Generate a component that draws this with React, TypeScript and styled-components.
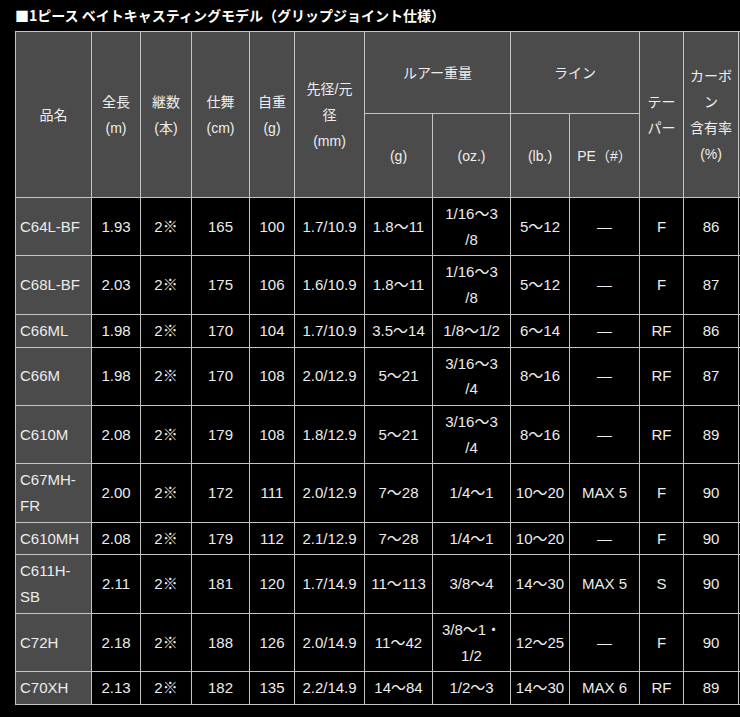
import React from "react";
import styled, { createGlobalStyle } from "styled-components";

interface RodRow {
  name: string;
  len: string;
  pcs: string;
  closed: string;
  weight: string;
  dia: string;
  lureG: string;
  lureOz: string;
  lineLb: string;
  pe: string;
  taper: string;
  carbon: string;
}

const rows: RodRow[] = [
  { name: "C64L-BF", len: "1.93", pcs: "2※", closed: "165", weight: "100", dia: "1.7/10.9", lureG: "1.8～11", lureOz: "1/16～3\n/8", lineLb: "5～12", pe: "—", taper: "F", carbon: "86" },
  { name: "C68L-BF", len: "2.03", pcs: "2※", closed: "175", weight: "106", dia: "1.6/10.9", lureG: "1.8～11", lureOz: "1/16～3\n/8", lineLb: "5～12", pe: "—", taper: "F", carbon: "87" },
  { name: "C66ML", len: "1.98", pcs: "2※", closed: "170", weight: "104", dia: "1.7/10.9", lureG: "3.5～14", lureOz: "1/8～1/2", lineLb: "6～14", pe: "—", taper: "RF", carbon: "86" },
  { name: "C66M", len: "1.98", pcs: "2※", closed: "170", weight: "108", dia: "2.0/12.9", lureG: "5～21", lureOz: "3/16～3\n/4", lineLb: "8～16", pe: "—", taper: "RF", carbon: "87" },
  { name: "C610M", len: "2.08", pcs: "2※", closed: "179", weight: "108", dia: "1.8/12.9", lureG: "5～21", lureOz: "3/16～3\n/4", lineLb: "8～16", pe: "—", taper: "RF", carbon: "89" },
  { name: "C67MH-\nFR", len: "2.00", pcs: "2※", closed: "172", weight: "111", dia: "2.0/12.9", lureG: "7～28", lureOz: "1/4～1", lineLb: "10～20", pe: "MAX 5", taper: "F", carbon: "90" },
  { name: "C610MH", len: "2.08", pcs: "2※", closed: "179", weight: "112", dia: "2.1/12.9", lureG: "7～28", lureOz: "1/4～1", lineLb: "10～20", pe: "—", taper: "F", carbon: "90" },
  { name: "C611H-\nSB", len: "2.11", pcs: "2※", closed: "181", weight: "120", dia: "1.7/14.9", lureG: "11～113", lureOz: "3/8～4", lineLb: "14～30", pe: "MAX 5", taper: "S", carbon: "90" },
  { name: "C72H", len: "2.18", pcs: "2※", closed: "188", weight: "126", dia: "2.0/14.9", lureG: "11～42", lureOz: "3/8～1・\n1/2", lineLb: "12～25", pe: "—", taper: "F", carbon: "90" },
  { name: "C70XH", len: "2.13", pcs: "2※", closed: "182", weight: "135", dia: "2.2/14.9", lureG: "14～84", lureOz: "1/2～3", lineLb: "14～30", pe: "MAX 6", taper: "RF", carbon: "89" },
];

// widths between grid lines, the last column runs off the page
const colWidths = [76, 49, 51, 58, 45, 70, 68, 78, 59, 70, 44, 55, 80];

const App: React.FC = () => {
  return (
    <>
      <GlobalStyle />
      <Page>
        <Title>■1ピース ベイトキャスティングモデル（グリップジョイント仕様）</Title>
        <SpecTable>
          <colgroup>
            {colWidths.map((w, i) => (
              <Col key={i} $w={w} />
            ))}
          </colgroup>
          <thead>
            <HeadRow $h={82}>
              <HeadCell rowSpan={2}>品名</HeadCell>
              <HeadCell rowSpan={2}>{"全長\n(m)"}</HeadCell>
              <HeadCell rowSpan={2}>{"継数\n(本)"}</HeadCell>
              <HeadCell rowSpan={2}>{"仕舞\n(cm)"}</HeadCell>
              <HeadCell rowSpan={2}>{"自重\n(g)"}</HeadCell>
              <HeadCell rowSpan={2}>{"先径/元\n径\n(mm)"}</HeadCell>
              <HeadCell colSpan={2}>ルアー重量</HeadCell>
              <HeadCell colSpan={2}>ライン</HeadCell>
              <HeadCell rowSpan={2}>{"テー\nパー"}</HeadCell>
              <HeadCell rowSpan={2}>{"カーボ\nン\n含有率\n(%)"}</HeadCell>
              <HeadCell rowSpan={2} />
            </HeadRow>
            <HeadRow $h={84}>
              <HeadCell>(g)</HeadCell>
              <HeadCell>(oz.)</HeadCell>
              <HeadCell>(lb.)</HeadCell>
              <HeadCell>PE（#）</HeadCell>
            </HeadRow>
          </thead>
          <tbody>
            {rows.map((r) => (
              <tr key={r.name}>
                <NameCell>{r.name}</NameCell>
                <DataCell>{r.len}</DataCell>
                <DataCell>{r.pcs}</DataCell>
                <DataCell>{r.closed}</DataCell>
                <DataCell>{r.weight}</DataCell>
                <DataCell>{r.dia}</DataCell>
                <DataCell>{r.lureG}</DataCell>
                <DataCell>{r.lureOz}</DataCell>
                <DataCell>{r.lineLb}</DataCell>
                <DataCell>{r.pe}</DataCell>
                <DataCell>{r.taper}</DataCell>
                <DataCell>{r.carbon}</DataCell>
                <DataCell />
              </tr>
            ))}
          </tbody>
        </SpecTable>
      </Page>
    </>
  );
};

export default App;

const GlobalStyle = createGlobalStyle`
  html, body {
    margin: 0;
    padding: 0;
    background: #000;
    overflow: hidden;
  }
`;

const Page = styled.div`
  width: 740px;
  overflow: hidden;
  padding: 5px 0 0 15px;
  box-sizing: border-box;
  font-family: "Liberation Sans", "Noto Sans CJK JP", sans-serif;
  color: #ececec;
`;

const Title = styled.div`
  font-family: "Noto Sans CJK JP", sans-serif;
  font-size: 14px;
  font-weight: bold;
  line-height: 20px;
  color: #fff;
  margin-bottom: 6px;
  white-space: nowrap;
`;

const SpecTable = styled.table`
  border-collapse: collapse;
  table-layout: fixed;
  width: ${colWidths.reduce((a, b) => a + b, 0)}px;
  font-size: 15px;
`;

const Col = styled.col<{ $w: number }>`
  width: ${({ $w }) => $w}px;
`;

const HeadRow = styled.tr<{ $h: number }>`
  height: ${({ $h }) => $h}px;
`;

const HeadCell = styled.th`
  background: #4b4b4b;
  border: 1px solid #c4c4c4;
  font-weight: normal;
  font-size: 14px;
  line-height: 26px;
  padding: 0 2px;
  text-align: center;
  vertical-align: middle;
  white-space: pre-line;
  color: #eeeeee;
`;

const DataCell = styled.td`
  background: #000;
  border: 1px solid #c4c4c4;
  line-height: 25.7px;
  padding: 3px 1px;
  text-align: center;
  vertical-align: middle;
  white-space: pre-line;
`;

const NameCell = styled(DataCell)`
  background: #4b4b4b;
  text-align: left;
  padding-left: 4px;
`;
